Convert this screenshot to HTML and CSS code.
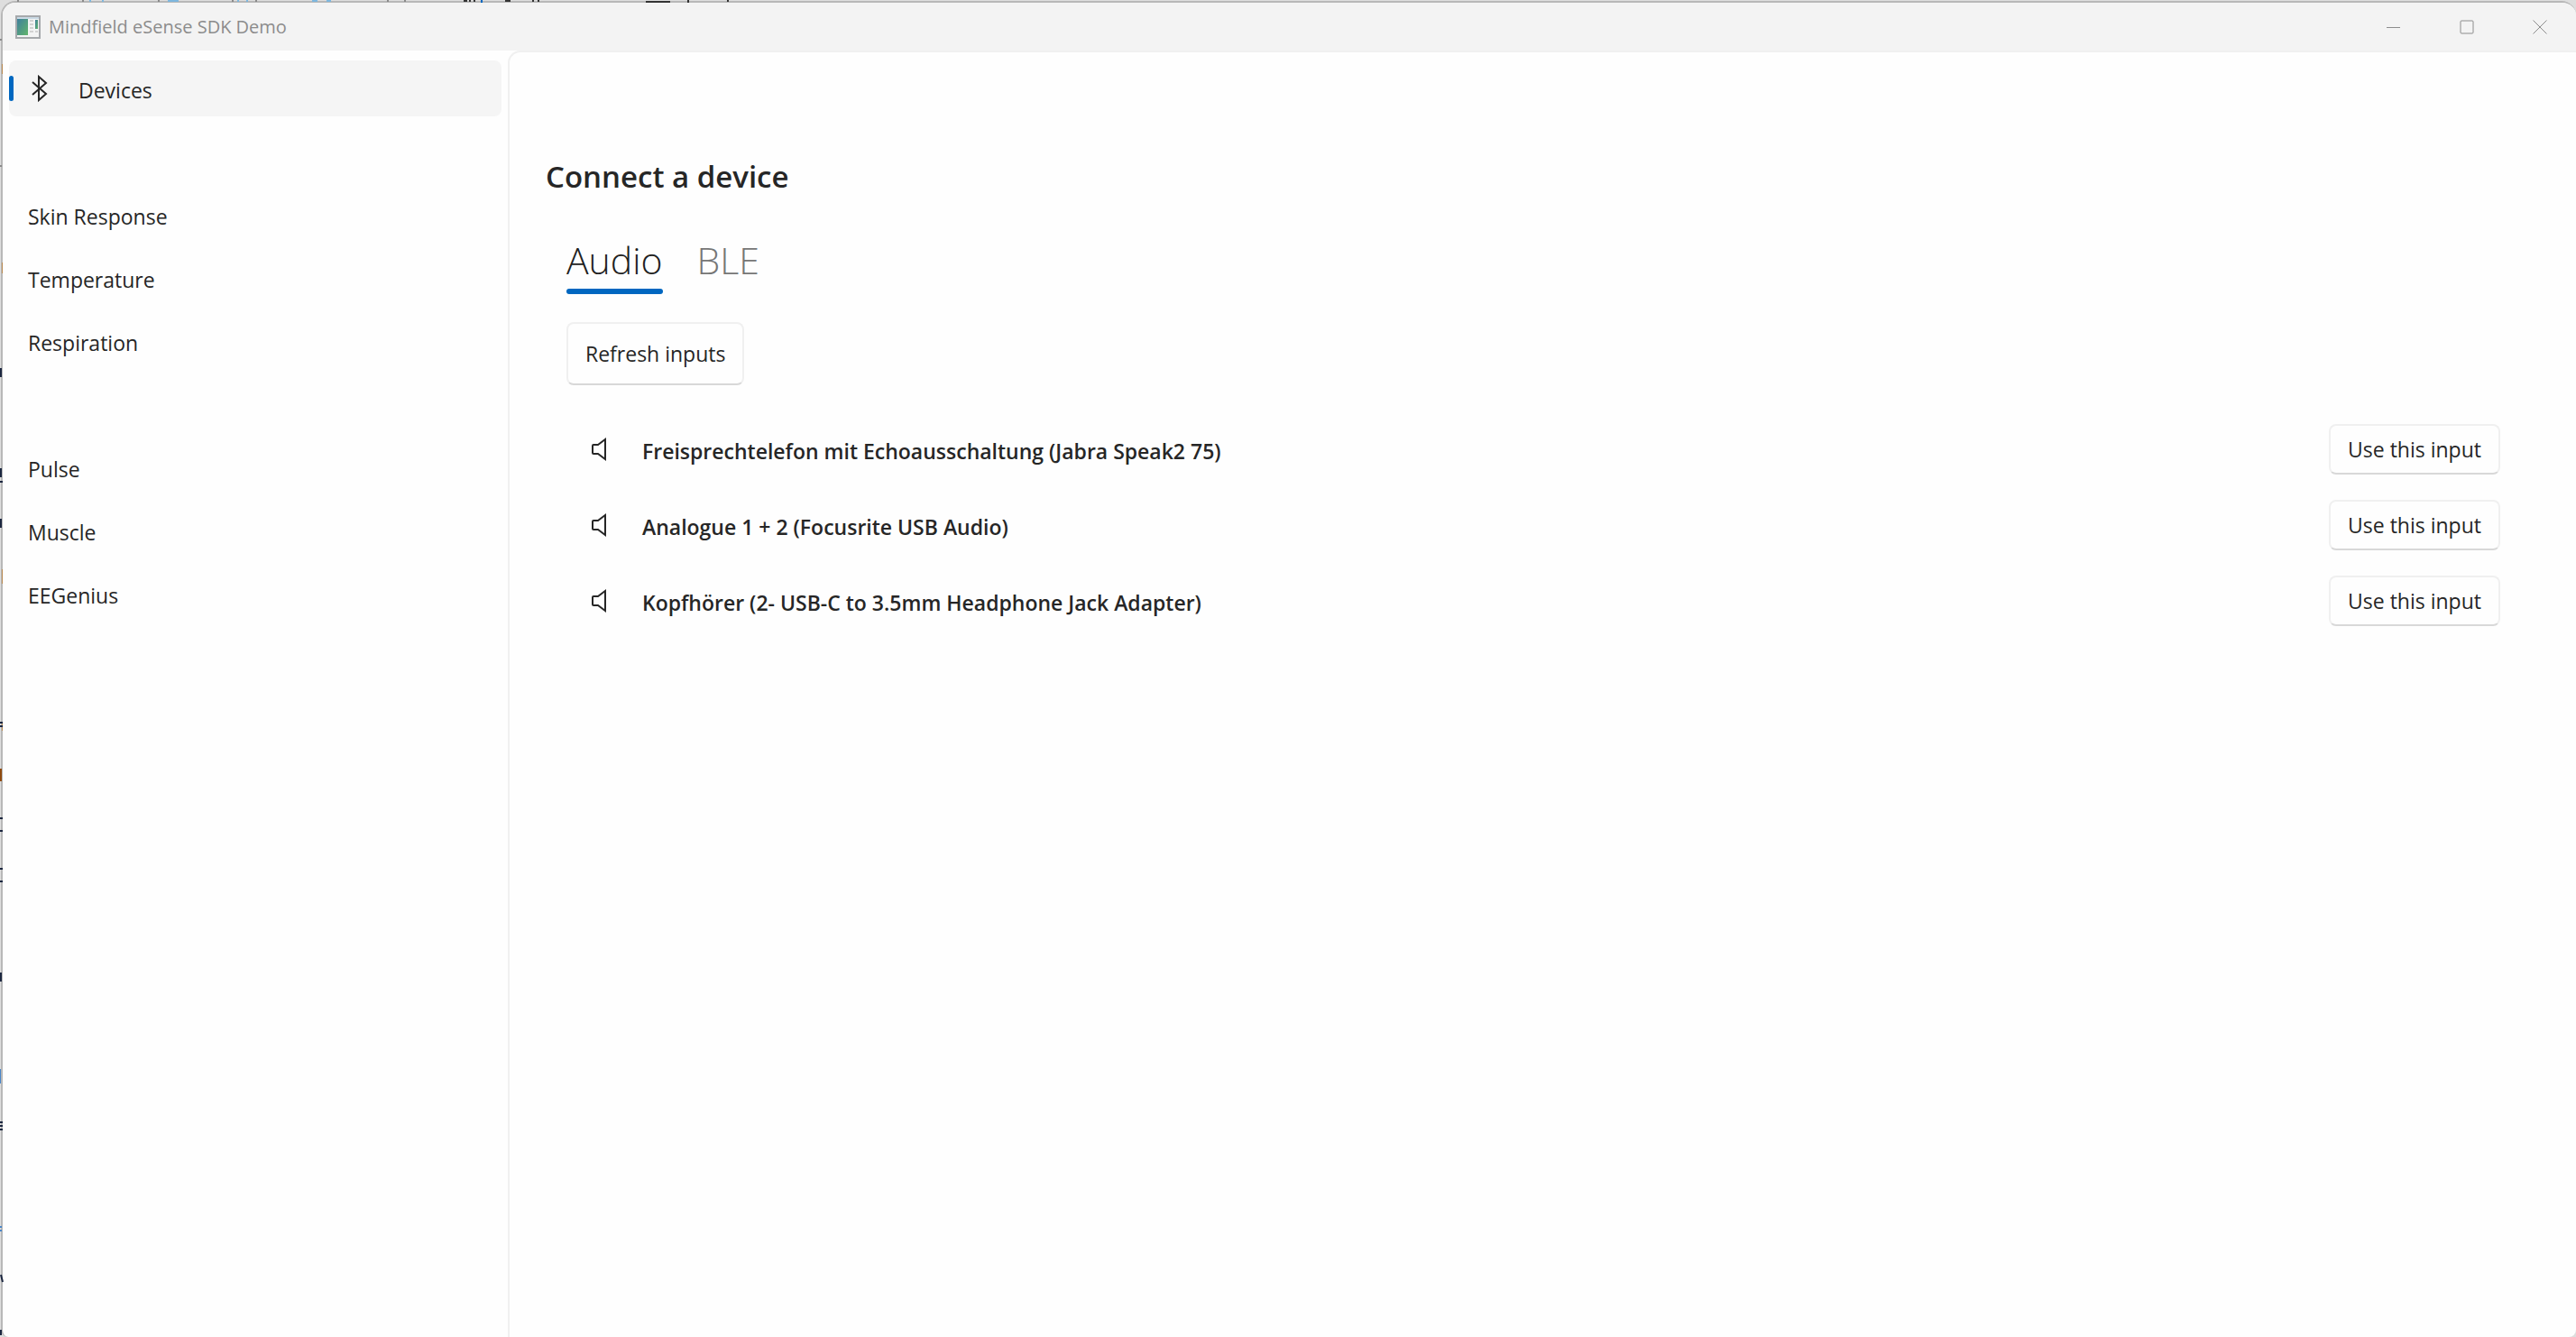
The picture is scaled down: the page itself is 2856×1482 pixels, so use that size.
FILE: index.html
```html
<!DOCTYPE html>
<html lang="en">
<head>
<meta charset="utf-8">
<title>Mindfield eSense SDK Demo</title>
<link rel="stylesheet" href="styles.css">
</head>
<body>
<div class="window">
  <header class="titlebar">
    <svg class="app-icon" viewBox="0 0 28 26" aria-hidden="true">
      <defs><linearGradient id="pane" x1="0" y1="0" x2="1" y2="1"><stop offset="0" stop-color="#3f7f9c"/><stop offset="1" stop-color="#62b56c"/></linearGradient></defs>
      <rect x="1" y="1" width="26" height="24" fill="#f3f4f4" stroke="#a6a9ac" stroke-width="2"/>
      <rect x="2" y="2" width="24" height="2" fill="#c9d9e4"/>
      <rect x="2" y="4" width="12" height="18" fill="url(#pane)"/>
      <path d="M16 6h4M16 10h4M16 14h4M16 18h4M22 18h3" stroke="#d2d2d2" stroke-width="2"/>
      <rect x="22" y="5" width="3" height="10" fill="url(#pane)"/>
    </svg>
    <span class="title">Mindfield eSense SDK Demo</span>
    <div class="caption">
      <button aria-label="Minimize"><svg viewBox="0 0 16 16"><path d="M0 8.500h15"/></svg></button>
      <button aria-label="Maximize"><svg viewBox="0 0 16 16"><rect x="1" y="1" width="14" height="14" rx="1"/></svg></button>
      <button aria-label="Close"><svg viewBox="0 0 16 16"><path d="M.5.5l15 15M15.500.5l-15 15"/></svg></button>
    </div>
  </header>
  <div class="body">
    <nav class="sidebar">
      <a class="item selected" href="#devices"><svg class="bt" viewBox="0 0 18 30" aria-hidden="true"><path d="M1 8l15 13-8 7V2l8 7L1 22"/></svg>Devices</a>
      <div class="group">
        <a class="item" href="#skin">Skin Response</a>
        <a class="item" href="#temperature">Temperature</a>
        <a class="item" href="#respiration">Respiration</a>
      </div>
      <div class="group">
        <a class="item" href="#pulse">Pulse</a>
        <a class="item" href="#muscle">Muscle</a>
        <a class="item" href="#eegenius">EEGenius</a>
      </div>
    </nav>
    <main class="content">
      <h1>Connect a device</h1>
      <div class="tabs" role="tablist">
        <button class="tab active" role="tab" aria-selected="true">Audio</button>
        <button class="tab" role="tab" aria-selected="false">BLE</button>
      </div>
      <button class="button refresh">Refresh inputs</button>
      <ul class="inputs">
        <li><svg class="speaker" viewBox="0 0 18 26" aria-hidden="true"><path d="M2 9q0-1 1-1h5l8-6v22l-8-6H3q-1 0-1-1z"/></svg><span class="name">Freisprechtelefon mit Echoausschaltung (Jabra Speak2 75)</span><button class="button">Use this input</button></li>
        <li><svg class="speaker" viewBox="0 0 18 26" aria-hidden="true"><path d="M2 9q0-1 1-1h5l8-6v22l-8-6H3q-1 0-1-1z"/></svg><span class="name">Analogue 1 + 2 (Focusrite USB Audio)</span><button class="button">Use this input</button></li>
        <li><svg class="speaker" viewBox="0 0 18 26" aria-hidden="true"><path d="M2 9q0-1 1-1h5l8-6v22l-8-6H3q-1 0-1-1z"/></svg><span class="name">Kopfhörer (2- USB-C to 3.5mm Headphone Jack Adapter)</span><button class="button">Use this input</button></li>
      </ul>
    </main>
  </div>
</div>
<!-- slivers of the windows behind, seen at the top and left edges -->
<svg class="behind" aria-hidden="true">
  <g stroke-width="2" fill="none">
    <path stroke="#8a8a8a" d="M20 0v2M92 0v2M176 0v2M258 0v2M284 0v2M430 0v2M449 0v2M0 44h2M0 184h2"/>
    <path stroke="#7db7de" d="M100 0v2M114 0v2M186 1h12M264 0v2M274 0v2M346 1h6M362 1h5"/>
    <path stroke="#333" d="M514 1h4M521 0v2M526 0v2M560 1h6M591 0v2M597 0v2M716 2h27M763 0v3M807 0v2"/>
    <path stroke="#0067c0" d="M534 0v3"/>
  </g>
  <g stroke-width="1" fill="none">
    <path stroke="#b98a52" d="M2.500 71v11M2.500 291v12M2.500 631v16M2.500 800v10"/>
    <path stroke="#4a86c8" stroke-width="2" d="M0 1185v16M0 1360h2M0 1364h2"/>
    <path stroke="#8f4a10" stroke-width="2" d="M1 852v14"/>
    <path stroke="#1c2740" stroke-width="2" d="M1 408v10M1 519v10M0 534h3M1 575v10M0 801h3M0 805h3M0 907h3M0 921h3M0 963h3M0 977h3M1 1078v10M0 1244h3M0 1248h3M0 1252h3M1 1413l2 8M1 1474v6"/>
  </g>
</svg>
</body>
</html>
```
FILE: styles.css
```css
* { box-sizing: border-box; }
body { margin: 0; padding: 1px 0 0 1px; background: #dedede; font: 23px/32px "Open Sans", "Noto Sans", sans-serif; color: #262626; }
button { font: inherit; color: inherit; background: none; border: 0; padding: 0; }
.behind { position: absolute; left: 0; top: 0; width: 100%; height: 100%; pointer-events: none; }
.window { display: flex; flex-direction: column; min-height: calc(100vh - 1px); border: 2px solid #b8b8b8; border-width: 2px 0 0 2px; border-radius: 16px 16px 8px 8px; overflow: hidden; background: #fefefe; }
.titlebar { display: flex; align-items: center; height: 53px; padding-left: 14px; background: #f3f3f3; color: #8c8c8c; font-size: 20px; }
.app-icon { width: 28px; height: 26px; margin-right: 9px; }
.title { padding-top: 1px; }
.caption { display: flex; margin-left: auto; align-self: stretch; }
.caption button { width: 81px; display: grid; place-items: center; }
.caption svg { width: 16px; height: 16px; fill: none; stroke: #8c8c8c; stroke-width: 1; }
.body { display: flex; flex: 1; }
.sidebar { width: 560px; padding: 11px 7px; display: flex; flex-direction: column; gap: 78px; }
.group { display: flex; flex-direction: column; gap: 8px; }
.item { display: flex; align-items: center; height: 62px; padding: 4px 0 0 21px; border-radius: 8px; color: inherit; text-decoration: none; position: relative; }
.selected { background: #f5f5f5; }
.selected::before { content: ""; position: absolute; left: 0; top: 17px; width: 5px; height: 28px; border-radius: 3px; background: #0067c0; }
.bt { width: 18px; height: 30px; margin: 0 34px 4px 4px; fill: none; stroke: #262626; stroke-width: 2; }
.content { flex: 1; border: 2px solid #f0f0f0; border-width: 2px 0 0 2px; border-top-left-radius: 14px; padding: 114px 84px 40px 40px; }
h1 { margin: 0; font-size: 33px; line-height: 48px; font-weight: 600; }
.tabs { display: flex; gap: 38px; padding: 40px 0 0 23px; }
.tab { font-size: 41px; line-height: 56px; font-weight: 300; color: #767676; padding-bottom: 10px; }
.tab.active { color: #1f1f1f; position: relative; }
.tab.active::after { content: ""; position: absolute; left: 0; right: 0; bottom: 0; height: 6px; border-radius: 3px; background: #0067c0; }
.button { height: 56px; padding: 0 19px; border: 2px solid #f0f0f0; border-bottom-color: #d8d8d8; border-radius: 8px; background: #fefefe; }
.refresh { height: 70px; margin: 31px 0 0 23px; }
.inputs { list-style: none; margin: 43px 0 0; padding: 0 0 0 50px; display: flex; flex-direction: column; gap: 28px; }
.inputs li { display: flex; align-items: center; }
.speaker { width: 18px; height: 26px; margin-right: 39px; fill: none; stroke: #262626; stroke-width: 2; }
.name { flex: 1; padding-top: 3px; font-weight: 600; }
```
